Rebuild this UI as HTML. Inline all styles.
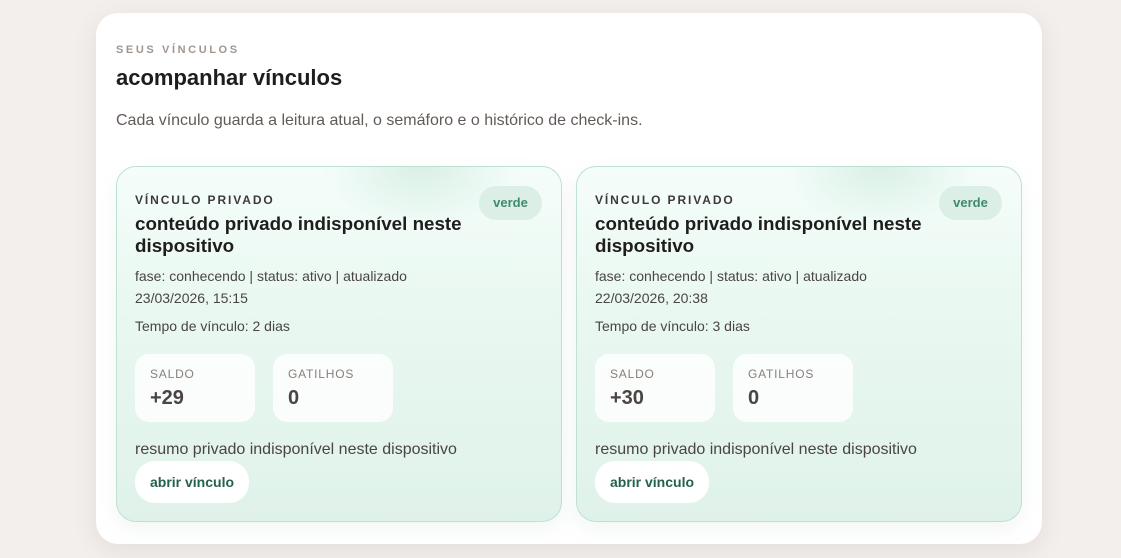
<!DOCTYPE html>
<html><head><meta charset="utf-8"><style>
*{box-sizing:border-box;margin:0;padding:0}
body{width:1121px;height:558px;background:#f3efec;font-family:"Liberation Sans",sans-serif;position:relative;overflow:hidden}
.panel{position:absolute;left:96px;top:13px;width:946px;height:531px;background:#fff;border-radius:22px;box-shadow:0 6px 24px rgba(120,100,90,.12)}
.eyebrow{position:absolute;left:20px;top:31px;font-size:11px;font-weight:bold;letter-spacing:2.6px;color:#a09690}
h1{position:absolute;left:20px;top:52px;font-size:22px;font-weight:bold;color:#1f1d1c}
.lead{position:absolute;left:20px;top:99px;font-size:16px;color:#625a56}
.card{position:absolute;top:153px;width:446px;height:356px;border:1px solid #bfe0d3;border-radius:20px;background:linear-gradient(180deg,#f5fdfa 0%,#e9f8f1 40%,#dff2e9 100%);overflow:hidden;box-shadow:0 8px 20px rgba(90,150,120,.08)}
.card:before{content:"";position:absolute;right:40px;top:-60px;width:200px;height:120px;border-radius:50%;background:radial-gradient(#d9f0e6,rgba(217,240,230,0) 70%)}
.c{position:absolute;left:18px}
.kick{top:26px;font-size:12px;font-weight:bold;letter-spacing:1.9px;color:#3c3a38}
.tit{top:46px;font-size:18.8px;font-weight:bold;color:#1f1d1c;line-height:22px;width:360px}
.meta{top:98px;font-size:14px;color:#4a4542;line-height:22px}
.tempo{top:151px;font-size:14px;color:#4a4542}
.stat{position:absolute;top:187px;width:120px;height:68px;background:rgba(255,255,255,.8);border-radius:14px}
.stat .l{position:absolute;left:15px;top:13px;font-size:12px;letter-spacing:.8px;color:#8a7f79}
.stat .v{position:absolute;left:15px;top:33px;font-size:20px;font-weight:bold;color:#4a4542}
.res{top:274px;font-size:16px;color:#4a4542}
.btn{position:absolute;left:18px;top:294px;width:114px;height:42px;border-radius:20px;background:#fff;font-size:14px;font-weight:bold;color:#24614b;text-align:center;line-height:42px}
.pill{position:absolute;right:19px;top:19px;width:63px;height:34px;border-radius:17px;background:#dcefe6;color:#3f8b6c;font-size:13px;font-weight:bold;text-align:center;line-height:34px}
</style></head><body>
<div class="panel">
<div class="eyebrow">SEUS VÍNCULOS</div>
<h1>acompanhar vínculos</h1>
<div class="lead">Cada vínculo guarda a leitura atual, o semáforo e o histórico de check-ins.</div>
<div class="card" style="left:20px">
<div class="pill">verde</div>
<div class="c kick">VÍNCULO PRIVADO</div>
<div class="c tit">conteúdo privado indisponível neste dispositivo</div>
<div class="c meta">fase: conhecendo | status: ativo | atualizado<br>23/03/2026, 15:15</div>
<div class="c tempo">Tempo de vínculo: 2 dias</div>
<div class="stat" style="left:18px"><div class="l">SALDO</div><div class="v">+29</div></div>
<div class="stat" style="left:156px"><div class="l">GATILHOS</div><div class="v">0</div></div>
<div class="c res">resumo privado indisponível neste dispositivo</div>
<div class="btn">abrir vínculo</div>
</div>
<div class="card" style="left:480px">
<div class="pill">verde</div>
<div class="c kick">VÍNCULO PRIVADO</div>
<div class="c tit">conteúdo privado indisponível neste dispositivo</div>
<div class="c meta">fase: conhecendo | status: ativo | atualizado<br>22/03/2026, 20:38</div>
<div class="c tempo">Tempo de vínculo: 3 dias</div>
<div class="stat" style="left:18px"><div class="l">SALDO</div><div class="v">+30</div></div>
<div class="stat" style="left:156px"><div class="l">GATILHOS</div><div class="v">0</div></div>
<div class="c res">resumo privado indisponível neste dispositivo</div>
<div class="btn">abrir vínculo</div>
</div>
</div>
</body></html>
